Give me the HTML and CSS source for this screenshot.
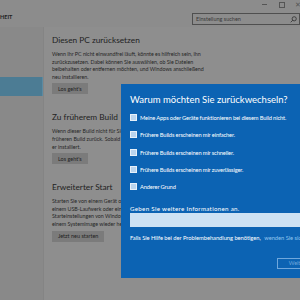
FILE: index.html
```html
<!DOCTYPE html>
<html>
<head>
	<meta charset="utf-8">
	<title>Wiederherstellung</title>
	<link rel="stylesheet" href="styles.css">
</head>
<body>
	<div class="window">
		<!-- Titelleiste -->
		<div class="titlebar">
			<span class="crumb">HEIT</span>
			<div class="tools">
				<div class="controls">
					<span class="min"></span>
					<span class="max"></span>
					<span class="close">&#x2715;</span>
				</div>
				<div class="search">
					<span>Einstellung suchen</span>
					<svg width="7" height="7" viewBox="0 0 10 10"><circle cx="6" cy="4" r="3" fill="none" stroke="#333" stroke-width="1.2"/><path d="M4 6 L1 9" stroke="#333" stroke-width="1.2"/></svg>
				</div>
			</div>
		</div>

		<div class="main">
			<div class="side">
				<div class="item active"></div>
			</div>
			<div class="content">
				<div class="section">
					<h2>Diesen PC zurücksetzen</h2>
					<p>Wenn Ihr PC nicht einwandfrei läuft, könnte es hilfreich sein, ihn<br>zurückzusetzen. Dabei können Sie auswählen, ob Sie Dateien<br>beibehalten oder entfernen möchten, und Windows anschließend<br>neu installieren.</p>
					<button class="btn">Los geht's</button>
				</div>
				<div class="section">
					<h2>Zu früherem Build</h2>
					<p>Wenn dieser Build nicht für Sie funktioniert, kehren Sie zum<br>früheren Build zurück. Sobald ein neuer Build verfügbar ist, wird<br>er installiert.</p>
					<button class="btn">Los geht's</button>
				</div>
				<div class="section">
					<h2>Erweiterter Start</h2>
					<p>Starten Sie von einem Gerät oder Datenträger (beispielsweise<br>einem USB-Laufwerk oder einer DVD), ändern Sie die<br>Starteinstellungen von Windows, oder stellen Sie Windows aus<br>einem Systemimage wieder her.</p>
					<button class="btn">Jetzt neu starten</button>
				</div>
			</div>
		</div>

		<!-- Dialog -->
		<div class="dialog">
			<h1>Warum möchten Sie zurückwechseln?</h1>
			<div class="options">
				<label class="opt"><span class="box"></span>Meine Apps oder Geräte funktionieren bei diesem Build nicht.</label>
				<label class="opt"><span class="box"></span>Frühere Builds erscheinen mir einfacher.</label>
				<label class="opt"><span class="box"></span>Frühere Builds erscheinen mir schneller.</label>
				<label class="opt"><span class="box"></span>Frühere Builds erscheinen mir zuverlässiger.</label>
				<label class="opt"><span class="box"></span>Anderer Grund</label>
			</div>
			<div class="more">Geben Sie weitere Informationen an.</div>
			<div class="field"></div>
			<div class="help">Falls Sie Hilfe bei der Problembehandlung benötigen, <span class="link">wenden Sie sich an den Support.</span></div>
			<div class="actions">
				<button class="next">Weiter</button>
			</div>
		</div>
	</div>
</body>
</html>
```

FILE: styles.css
```css
html,body{
	margin: 0;
	padding: 0;
}
body{
	width: 300px;
	height: 300px;
	overflow: hidden;
}
.window{
	position: relative;
	width: 300px;
	height: 300px;
	overflow: hidden;
	background: #8c8c8c;
	display: flex;
	flex-direction: column;
	font-family: "Lato", "Liberation Sans", sans-serif;
	color: #262626;
}
/* Titelleiste */
.titlebar{
	height: 27px;
	display: flex;
	justify-content: space-between;
	flex-shrink: 0;
}
.crumb{
	font-size: 5.5px;
	font-weight: bold;
	margin-top: 14px;
	color: #222;
}
.tools{
	width: 103px;
	display: flex;
	flex-direction: column;
	align-items: flex-end;
}
.controls{
	height: 13px;
	display: flex;
	align-items: flex-start;
}
.min{
	width: 5px;
	height: 1px;
	background: #555;
	margin: 4px 12px 0 0;
}
.max{
	width: 4px;
	height: 4px;
	border: 1px solid #555;
	margin: 2px 10px 0 0;
}
.close{
	font-size: 7px;
	line-height: 8px;
	color: #555;
	margin-right: -1px;
}
.search{
	width: 101px;
	height: 10px;
	border: 1px solid #4f4f4f;
	display: flex;
	align-items: center;
	justify-content: space-between;
	padding: 0 2px 0 3px;
	font-size: 5.5px;
	color: #3a3a3a;
	box-sizing: content-box;
}
/* Hauptbereich */
.main{
	flex: 1;
	display: flex;
}
.side{
	width: 43px;
	border-right: 1px solid #848484;
	background: #898989;
	padding-top: 50px;
}
.item{
	height: 19px;
}
.active{
	background: #4c7c94;
	border-right: 1px solid #5c8ba2;
}
.content{
	flex: 1;
	padding: 5px 0 0 8px;
	background: #8e8e8e;
	display: flex;
	flex-direction: column;
	gap: 15px;
}
.section h2{
	font-size: 8.3px;
	font-weight: normal;
	line-height: 16px;
	margin: 0;
	color: #222;
}
.section p{
	font-size: 5.3px;
	line-height: 7.6px;
	margin: 3px 0 0;
	white-space: nowrap;
	color: #262626;
}
.btn{
	display: block;
	height: 11px;
	margin-top: 2px;
	padding: 0 6px;
	border: none;
	background: #7b7b7b;
	font-family: inherit;
	font-size: 5.5px;
	color: #222;
}
/* Dialog */
.dialog{
	position: absolute;
	left: 121px;
	top: 84px;
	width: 200px;
	height: 194px;
	box-sizing: border-box;
	padding: 8px 0 0 9px;
	background: #0c63b3;
	color: #fff;
}
.dialog h1{
	font-size: 9.5px;
	font-weight: normal;
	line-height: 16px;
	margin: 0;
	white-space: nowrap;
}
.options{
	display: flex;
	flex-direction: column;
	gap: 9.3px;
	margin-top: 5.7px;
}
.opt{
	display: flex;
	align-items: center;
	height: 8px;
	font-size: 5.75px;
	letter-spacing: -0.15px;
	white-space: nowrap;
}
.box{
	width: 5px;
	height: 5px;
	border: 1px solid #e6f0f9;
	background: #b9d4ee;
	margin-right: 3px;
	flex-shrink: 0;
}
.more{
	font-size: 6.2px;
	letter-spacing: 0.3px;
	line-height: 8px;
	margin-top: 14px;
	white-space: nowrap;
}
.field{
	height: 14px;
	background: #cde2f4;
}
.help{
	font-size: 5.8px;
	letter-spacing: -0.05px;
	line-height: 8px;
	margin-top: 7px;
	white-space: nowrap;
}
.link{
	color: #8fc3ee;
	margin-left: 2px;
}
.actions{
	display: flex;
	padding-left: 147px;
	margin-top: 16px;
}
.next{
	height: 11px;
	width: 40px;
	border: 1px solid #6fa7dc;
	background: transparent;
	color: #6fa7dc;
	font-family: inherit;
	font-size: 5.5px;
}
```
